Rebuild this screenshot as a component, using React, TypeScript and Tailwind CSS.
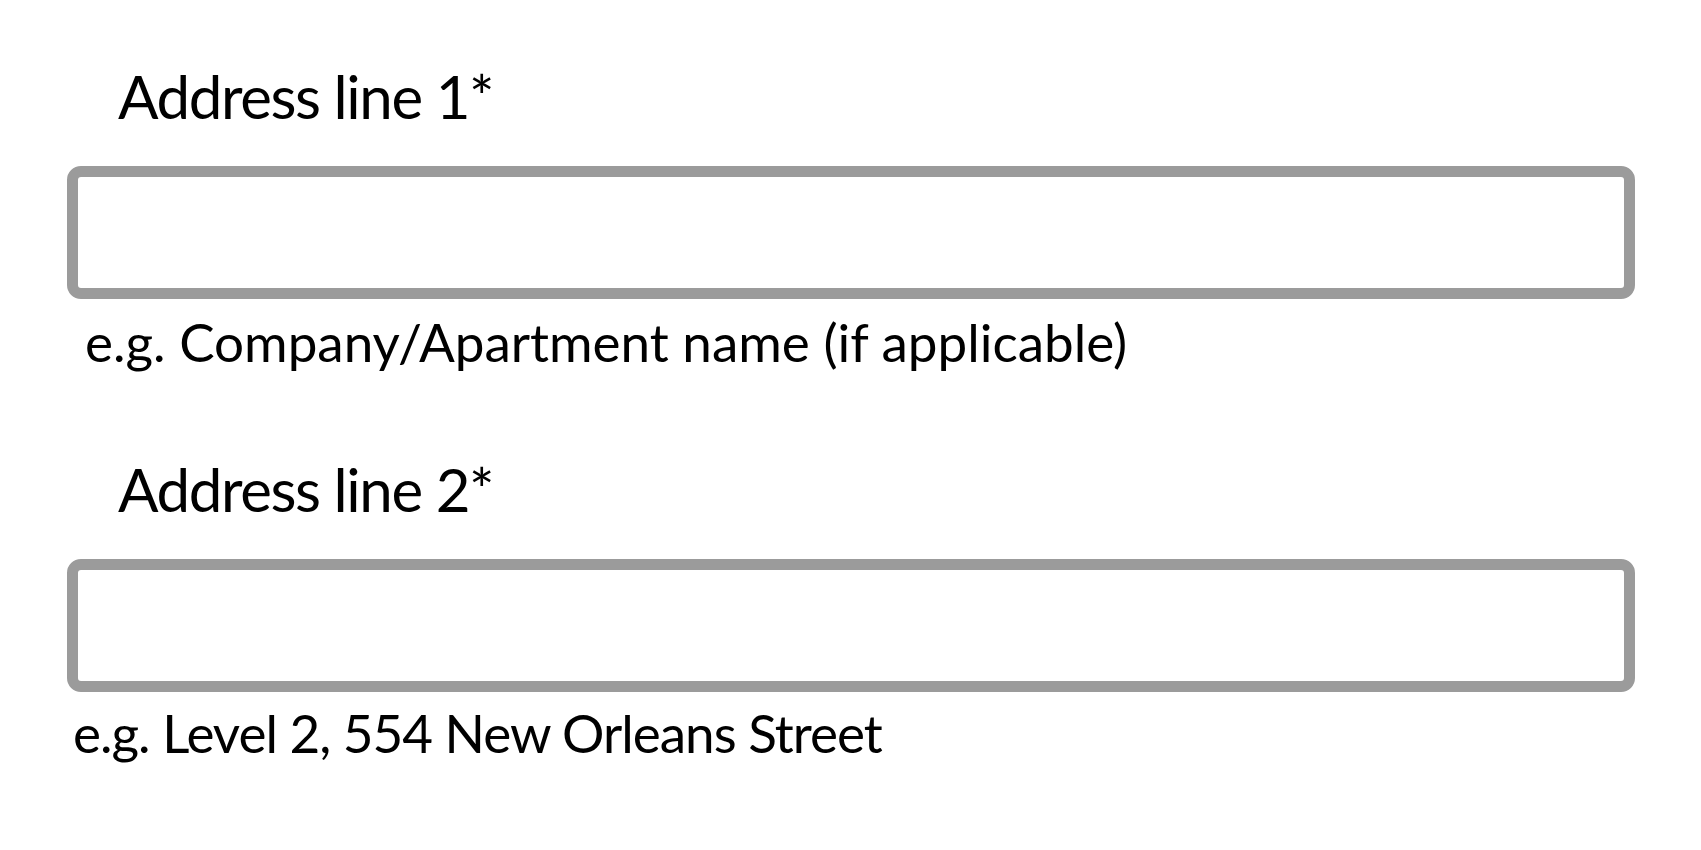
import React from 'react';

const FIELDS = [
  {
    label: 'Address line 1*',
    hint: 'e.g. Company/Apartment name (if applicable)',
    hintCls: 'ml-[85px] mt-[16px] tracking-normal',
  },
  {
    label: 'Address line 2*',
    hint: 'e.g. Level 2, 554 New Orleans Street',
    hintCls: 'ml-[73px] mt-[14px] tracking-[-1px]',
  },
];

export default function App() {
  return (
    <div className="min-h-screen w-full bg-white text-black font-['Lato','Liberation_Sans',sans-serif] pt-[66px]">
      {FIELDS.map((f, i) => (
        <div key={f.label} className={i > 0 ? 'mt-[91px]' : ''}>
          <label className="block ml-[118px] text-[60px] leading-none tracking-[-1.4px]">{f.label}</label>
          <input
            type="text"
            className="block mt-[40px] mx-[67px] w-[1568px] h-[133px] border-[11px] border-[#9b9b9b] rounded-[14px] bg-white outline-none"
          />
          <p className={`text-[53px] leading-none ${f.hintCls}`}>{f.hint}</p>
        </div>
      ))}
    </div>
  );
}
